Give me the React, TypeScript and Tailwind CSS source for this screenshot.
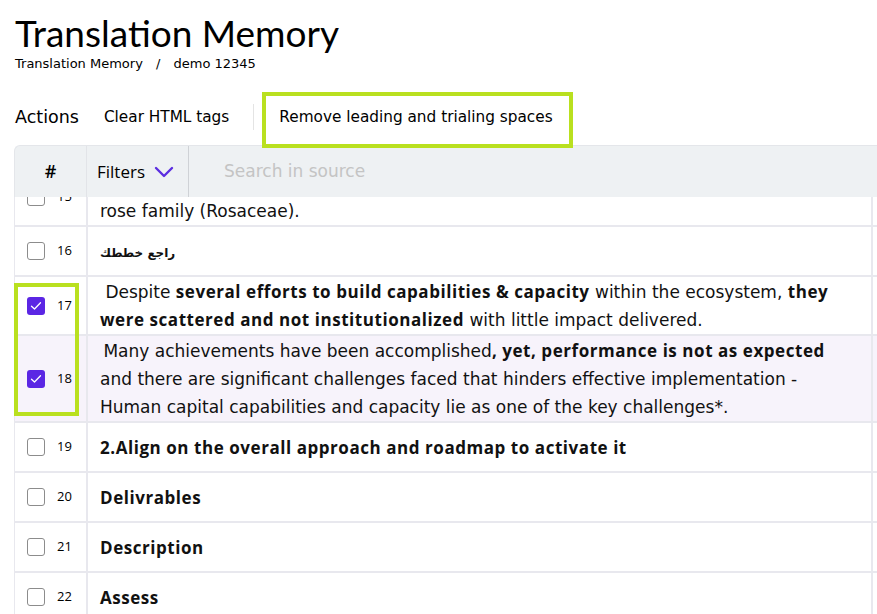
import React from "react";

type Row = {
  n: number;
  checked?: boolean;
  highlight?: boolean;
  content: React.ReactNode;
};

function Check({ checked }: { checked?: boolean }) {
  if (checked) {
    return (
      <span className="flex h-[18px] w-[18px] items-center justify-center rounded-[3px] bg-[#5b26e4]">
        <svg width="12" height="10" viewBox="0 0 12 10" fill="none">
          <path d="M1.5 5.2 4.5 8 10.5 1.8" stroke="white" strokeWidth="1.3" strokeLinecap="round" strokeLinejoin="round" />
        </svg>
      </span>
    );
  }
  return <span className="block h-[18px] w-[18px] rounded-[3px] border-[1.5px] border-[#8c8c8c] bg-white" />;
}

function B({ children }: { children: React.ReactNode }) {
  return <b className="font-['Open_Sans',sans-serif] font-bold tracking-[0.55px]">{children}</b>;
}

const rows: Row[] = [
  {
    n: 16,
    content: <span className="font-['DejaVu_Sans',sans-serif] text-[12px] font-bold">راجع خططك</span>,
  },
  {
    n: 17,
    checked: true,
    content: (
      <>
        &nbsp;Despite <B>several efforts to build capabilities &amp; capacity</B> within the ecosystem, <B>they were scattered and not institutionalized</B> with little impact delivered.
      </>
    ),
  },
  {
    n: 18,
    checked: true,
    highlight: true,
    content: (
      <>
        &thinsp;Many achievements have been accomplished<B>, yet, performance is not as expected</B> and there are significant challenges faced that hinders effective implementation - Human capital capabilities and capacity lie as one of the key challenges*.
      </>
    ),
  },
  { n: 19, content: <B>2.Align on the overall approach and roadmap to activate it</B> },
  { n: 20, content: <B>Delivrables</B> },
  { n: 21, content: <B>Description</B> },
  { n: 22, content: <B>Assess</B> },
];

function TableRow({ row, className = "" }: { row: Row; className?: string }) {
  return (
    <div className={`flex min-h-[50px] border-b-2 border-[#e8e8ee] ${row.highlight ? "bg-[#f7f3fb]" : "bg-white"} ${className}`}>
      <div className="flex w-[71px] shrink-0 items-center gap-[12px] pl-[12px]">
        <Check checked={row.checked} />
        <span className="font-['Open_Sans',sans-serif] text-[13px] text-black">{row.n}</span>
      </div>
      <div className="flex w-[787px] shrink-0 items-center border-x-2 border-[#e8e8ee] pt-[1px] pl-[12px] pr-[18px] font-['DejaVu_Sans',sans-serif] text-[17px] leading-[28px] text-[#111]">
        <div>{row.content}</div>
      </div>
    </div>
  );
}

export default function App() {
  return (
    <div className="relative h-[614px] w-[877px] overflow-hidden bg-white font-['DejaVu_Sans',sans-serif] text-black">
      <div className="pl-[15px] pt-[11px]">
        <h1 className="font-['Lato',sans-serif] text-[37px] leading-[44px] font-normal">Translation Memory</h1>
        <div className="text-[13px] leading-[18px]">
          Translation Memory <span className="mx-[9px]">/</span> demo 12345
        </div>
      </div>

      <div className="mt-[28px] flex h-[32px] items-center pl-[15px]">
        <span className="text-[17.5px]">Actions</span>
        <button className="ml-[25px] text-[15.3px]">Clear HTML tags</button>
        <span className="ml-[24px] h-[26px] w-px bg-[#e4e4e4]" />
        <button className="ml-[25px] text-[15.3px]">Remove leading and trialing spaces</button>
      </div>

      <div className="ml-[14px] mt-[12px]">
        <div className="flex h-[52px] rounded-tl-[6px] border-l border-t border-[#e4e6ea] bg-[#eef1f3]">
          <div className="flex w-[71px] shrink-0 items-center justify-center font-['Open_Sans',sans-serif] text-[18px] font-semibold">#</div>
          <div className="flex w-[102px] shrink-0 items-center gap-[9px] border-l border-[#e2e4e8] pl-[10px] font-['Open_Sans',sans-serif] text-[17px] font-medium">
            Filters
            <svg width="20" height="12" viewBox="0 0 20 12" fill="none">
              <path d="M2 2 10 10 18 2" stroke="#5b2ee0" strokeWidth="2.4" strokeLinecap="round" strokeLinejoin="round" />
            </svg>
          </div>
          <div className="flex flex-1 items-center border-l border-[#cfd2d6] pl-[35px] text-[17px] text-[#c4c4c4]">Search in source</div>
        </div>

        <div className="h-[420px] overflow-hidden border-l border-[#e8e8ee]">
          <TableRow
            className="-mt-[29px]"
            row={{
              n: 15,
              content: (
                <>
                  The apple is the edible fruit of a tree in the
                  <br />
                  rose family (Rosaceae).
                </>
              ),
            }}
          />
          {rows.map((r) => (
            <TableRow key={r.n} row={r} />
          ))}
        </div>
      </div>

      <div className="pointer-events-none absolute left-[262px] top-[92px] h-[56px] w-[311px] border-4 border-[#b9e01f]" />
      <div className="pointer-events-none absolute left-[14px] top-[283px] h-[133px] w-[65px] border-4 border-[#b9e01f]" />
    </div>
  );
}
